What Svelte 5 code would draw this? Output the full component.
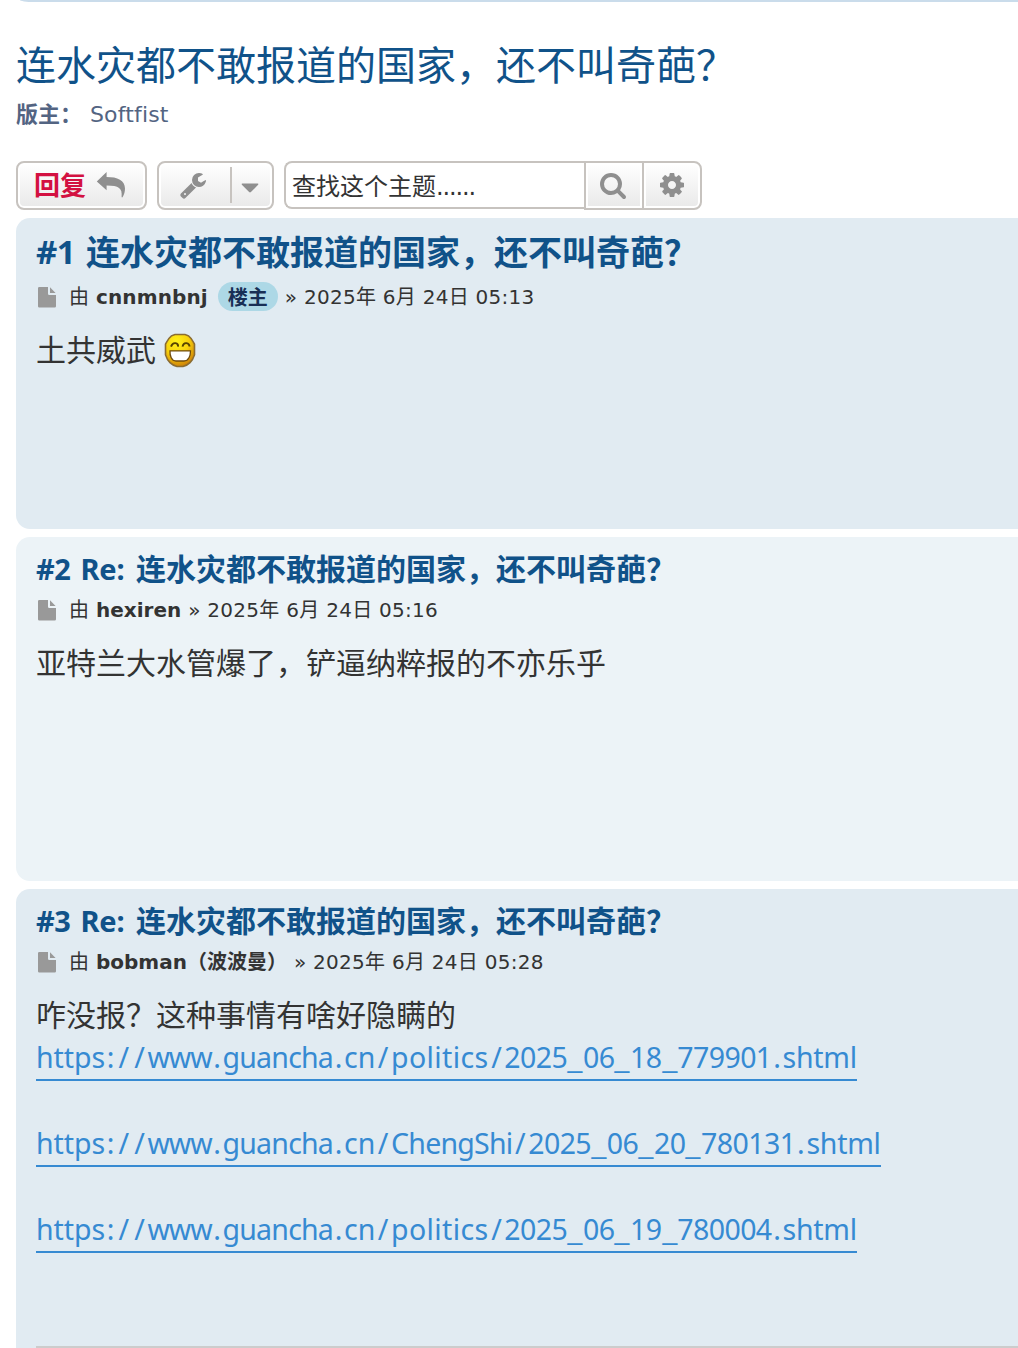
<script>
  const subject = '连水灾都不敢报道的国家，还不叫奇葩？';
  const posts = [
    { no: '#1', re: '', author: 'cnnmnbnj', cjk: '', op: true, day: '24', time: '05:13', text: '土共威武', smile: true, links: [] },
    { no: '#2', re: 'Re:', author: 'hexiren', cjk: '', op: false, day: '24', time: '05:16', text: '亚特兰大水管爆了，铲逼纳粹报的不亦乐乎', smile: false, links: [] },
    {
      no: '#3', re: 'Re:', author: 'bobman', cjk: '（波波曼）', op: false, day: '24', time: '05:28', text: '咋没报？这种事情有啥好隐瞒的', smile: false,
      links: [
        'https://www.guancha.cn/politics/2025_06_18_779901.shtml',
        'https://www.guancha.cn/ChengShi/2025_06_20_780131.shtml',
        'https://www.guancha.cn/politics/2025_06_19_780004.shtml'
      ]
    }
  ];

  // Advance widths in thousandths of an em: [wanted at 30px, Noto Sans at 28.5px].
  const advances = {
    a: [525, 561], c: [495, 480], e: [545, 564], g: [502, 615], h: [546, 618], i: [285, 258], l: [295, 258],
    m: [830, 932], n: [546, 618], o: [537, 605], p: [557, 615], s: [405, 479], t: [396, 361], u: [546, 618],
    w: [712, 786], C: [598, 632], S: [481, 549], '/': [524, 372], ':': [367, 268], '.': [367, 268], _: [524, 444]
  };
  function tokens(link) {
    return link.match(/[a-z]+|\d+|./gi).map((text) => {
      let want = 0;
      let natural = 0;
      for (const ch of text) {
        const [a, b] = advances[ch] ?? [524, 572];
        want += a * 0.03;
        natural += b * 0.0285;
      }
      return { text, width: want, gap: text.length > 1 ? (want - natural) / text.length : 0 };
    });
  }
</script>

<div class="page">
  <div class="navbar"></div>
  <h2>{subject}</h2>
  <p class="mods"><strong>版主：</strong><span>Softfist</span></p>

  <div class="actions">
    <button class="btn reply">
      <span>回复</span>
      <svg width="30" height="28" viewBox="0 0 30 28"><path d="M.8 10.400 10.600 1v4.900C21.500 5.900 29 9 29 17.600c0 3-.8 6-2.300 8.400-.5.800-1.200.5-1.100-.400C26.400 17 23 14.400 10.600 14.400v4.900Z" /></svg>
    </button>
    <button class="btn tools">
      <svg class="wrench" width="28" height="28" viewBox="0 0 1792 1792"><path d="M448 1472q0-26-19-45t-45-19-45 19-19 45 19 45 45 19 45-19 19-45zm644-420l-682 682q-37 37-90 37-52 0-91-37l-106-108q-38-36-38-90 0-53 38-91l681-681q39 98 114.500 173.500t173.500 114.500zm634-435q0 39-23 106-47 134-164.500 217.500t-258.500 83.500q-185 0-316.500-131.500t-131.500-316.500 131.500-316.500 316.500-131.500q58 0 121.500 16.500t107.500 46.500q16 11 16 28t-16 28l-293 169v224l193 107q5-3 79-48.500t135.500-81 70.500-35.500q15 0 23.500 10t8.500 25z" /></svg>
      <span class="caret"><svg width="18" height="10" viewBox="0 0 18 10"><path d="M1.300.5h15.400q1.200.300.4 1.300L9.900 9q-.9.800-1.800 0L.9 1.800Q.1.800 1.300.5Z" /></svg></span>
    </button>
    <div class="search">
      <div class="field">查找这个主题<span>......</span></div>
      <button class="btn find"><svg width="28" height="28" viewBox="0 0 1792 1792"><path d="M1216 832q0-185-131.500-316.500t-316.500-131.500-316.500 131.500-131.500 316.500 131.500 316.500 316.500 131.500 316.500-131.500 131.500-316.500zm512 832q0 52-38 90t-90 38q-54 0-90-38l-343-342q-179 124-399 124-143 0-273.500-55.500t-225-150-150-225-55.500-273.500 55.500-273.500 150-225 225-150 273.500-55.500 273.500 55.500 225 150 150 225 55.500 273.500q0 220-124 399l343 343q37 37 37 90z" /></svg></button>
      <button class="btn gear"><svg width="28" height="28" viewBox="0 0 1792 1792"><path d="M1152 896q0-106-75-181t-181-75-181 75-75 181 75 181 181 75 181-75 75-181zm512-109v222q0 12-8 23t-20 13l-185 28q-19 54-39 91 35 50 107 138 10 12 10 25t-9 23q-27 37-99 108t-94 71q-12 0-26-9l-138-108q-44 23-91 38-16 136-29 186-7 28-36 28h-222q-14 0-24.500-8.500t-11.500-21.500l-28-184q-49-16-90-37l-141 107q-10 9-25 9-14 0-25-11-126-114-165-168-7-10-7-23 0-12 8-23 15-21 51-66.500t54-70.500q-27-50-41-99l-183-27q-13-2-21-12.500t-8-23.500v-222q0-12 8-23t19-13l186-28q14-46 39-92-40-57-107-138-10-12-10-24 0-10 9-23 26-36 98.500-107.500t94.500-71.500q13 0 26 10l138 107q44-23 91-38 16-136 29-186 7-28 36-28h222q14 0 24.500 8.500t11.500 21.500l28 184q49 16 90 37l142-107q9-9 24-9 13 0 25 10 129 119 165 170 7 8 7 22 0 12-8 23-15 21-51 66.500t-54 70.500q26 50 41 98l183 28q13 2 21 12.500t8 23.500z" /></svg></button>
    </div>
  </div>

  {#each posts as post, i}
    <article class="post post{i + 1}">
      <h3><span class="no">{post.no}</span>{#if post.re}<span class="re">{post.re}</span>{/if}<span>{subject}</span></h3>
      <p class="meta">
        <svg class="file" width="18" height="21" viewBox="0 0 18 21"><path d="M0 1.300Q0 0 1.300 0H10v6.700Q10 8 11.300 8H18v11.200q0 1.300-1.300 1.300H1.300Q0 20.500 0 19.200ZM12 .300l5.600 5.700H12Z" /></svg>
        <span class="by">由</span>
        <strong><span class="name">{post.author}</span>{post.cjk}</strong>
        {#if post.op}<span class="badge">楼主</span>{/if}
        <span class="date">» 2025年 6月 {post.day}日 {post.time}</span>
      </p>
      <div class="content">
        <div class="line">
          <span>{post.text}</span>
          {#if post.smile}
            <svg class="smile" width="32" height="35" viewBox="0 0 32 36" preserveAspectRatio="none">
              <defs>
                <radialGradient id="face" cx=".38" cy=".22" r=".85">
                  <stop offset="0" stop-color="#fff21a" />
                  <stop offset=".5" stop-color="#f8d00c" />
                  <stop offset="1" stop-color="#c77606" />
                </radialGradient>
              </defs>
              <path d="M11 1.500h10q4 1 6 4t3.500 6v11q-1.500 5-4.500 8t-7 4h-6q-4-1-7-4t-4.500-8v-11q1.500-3 3.500-6t6-4Z" fill="url(#face)" stroke="#8b6d32" stroke-width="1.600" stroke-linejoin="round" />
              <path d="M7 14q1.500-4 4.500-3.500T14 14M18.500 14q1-4 4-3.500T25.500 14" fill="none" stroke="#574300" stroke-width="1.900" />
              <path d="M6 18.500h20.500q0 4-1.500 7-1.700 3.300-5 3.300h-8q-3.300 0-4.800-3.300T6 18.500Z" fill="#fff" stroke="#6f4a0b" stroke-width="1.300" />
            </svg>
          {/if}
        </div>
        {#each post.links as link}
          <div class="linkrow">
            <a href={link}>{#each tokens(link) as t}<span class:bar={t.text === '_'} class:mark={t.gap === 0} style="width:{t.width}px;letter-spacing:{t.gap}px">{t.text}</span>{/each}</a>
          </div>
        {/each}
      </div>
      {#if post.links.length}<div class="rule"></div>{/if}
    </article>
  {/each}
</div>

<style>
  :global(body) { background: #fff; overflow: hidden; }
  .page { box-sizing: border-box; width: 1018px; height: 1348px; overflow: hidden; padding-left: 16px; color: #333; font-family: 'DejaVu Sans', 'Noto Sans CJK SC', sans-serif; }
  .page * { box-sizing: border-box; }
  h2, h3, p { margin: 0; }
  svg { display: block; flex: none; }
  .navbar { height: 2px; background: #cadceb; border-bottom-left-radius: 14px 2px; margin-left: 4px; }
  h2 { margin-top: 31px; height: 62px; font: 400 40px/60px 'Noto Sans CJK SC', sans-serif; color: #105289; white-space: nowrap; }
  .mods { display: flex; height: 32px; margin-top: 3px; font-size: 22px; line-height: 34px; color: #536482; }
  .mods strong { width: 74px; white-space: nowrap; line-height: 28px; font-family: 'Noto Sans CJK SC', sans-serif; }
  .mods span { letter-spacing: .15px; }
  .actions { display: flex; margin-top: 31px; height: 49px; }
  .btn { display: flex; align-items: center; height: 49px; margin: 0; padding: 0 0 1px; border: 2px solid #c7c3bf; border-radius: 8px; background: linear-gradient(#fff, #e9e9e9); box-shadow: inset 0 0 0 2px #fff; fill: #8f8f8f; font-family: 'Noto Sans CJK SC', sans-serif; }
  .reply { width: 131px; padding-left: 16px; padding-bottom: 2px; gap: 10px; color: #d31141; font-size: 26px; font-weight: 700; line-height: 36px; }
  .reply span { padding-bottom: 2px; }
  .tools { width: 117px; margin-left: 10px; padding-left: 20px; }
  .caret { display: flex; align-items: center; height: 36px; margin-left: 23px; padding: 5px 0 0 9px; border-left: 2px solid #c7c3bf; }
  .search { display: flex; margin-left: 10px; }
  .field { width: 300px; height: 48px; padding-left: 6px; border: 2px solid #c7c3bf; border-right: 0; border-radius: 8px 0 0 8px; font: 24px/44px 'Noto Sans CJK SC', sans-serif; color: #333; white-space: nowrap; }
  .field span { font-family: 'DejaVu Sans', sans-serif; letter-spacing: -1.150px; }
  .find { width: 60px; padding-left: 13px; border-radius: 0; }
  .gear { width: 60px; margin-left: -2px; padding-left: 13.5px; border-radius: 0 8px 8px 0; }
  .post { height: 311px; margin-top: 8px; padding: 11px 0 0 20px; border-radius: 14px 0 0 14px; background: #e1ebf2; }
  .post2 { height: 344px; background: #ecf3f7; }
  .post3 { height: 480px; border-bottom-left-radius: 0; }
  h3 { display: flex; height: 42px; font: 700 30px/38px 'Noto Sans CJK SC', sans-serif; color: #105289; white-space: nowrap; }
  .no, .re { font: 700 29px/42px 'Noto Sans', sans-serif; }
  .no { width: 44.5px; letter-spacing: -.4px; }
  .re { width: 55.5px; letter-spacing: -.2px; }
  .post1 h3 { height: 46px; font-size: 34px; line-height: 44px; }
  .post1 .no { width: 50px; font-size: 33px; line-height: 46px; letter-spacing: -.6px; }
  .meta { display: flex; align-items: center; height: 32px; margin-top: 4px; font-size: 20px; line-height: 32px; white-space: nowrap; }
  .post1 .meta { margin-top: 6px; }
  .file { fill: #999; margin: 0 13px 0 2px; }
  .by { width: 27px; }
  .meta strong { margin-right: 7px; }
  .post1 .name { letter-spacing: .12px; }
  .badge { height: 29px; margin-right: 7px; margin-left: 3px; padding: 0 10px; border-radius: 15px; background: #add8e6; color: #182f55; font: 700 20px/29px 'Noto Sans CJK SC', sans-serif; transform: translateY(-1px); }
  .date { letter-spacing: .27px; }
  .content { margin-top: 14px; font: 30px/43px 'Noto Sans CJK SC', sans-serif; }
  .line { display: flex; height: 43px; gap: 8px; white-space: nowrap; }
  .smile { margin-top: 6px; }
  .linkrow { display: flex; height: 43px; margin-bottom: 43px; }
  .linkrow a { display: flex; flex: none; height: 43px; margin-top: 3px; font: 28.5px/39px 'Noto Sans', sans-serif; color: #368ad2; text-decoration: none; border-bottom: 2px solid #368ad2; white-space: nowrap; }
  .linkrow span { flex: none; }
  .linkrow .mark { text-align: center; }
  .linkrow .bar { transform: scaleX(1.2); }
  .rule { height: 2px; margin-top: 96px; background: #ccc; }
</style>
